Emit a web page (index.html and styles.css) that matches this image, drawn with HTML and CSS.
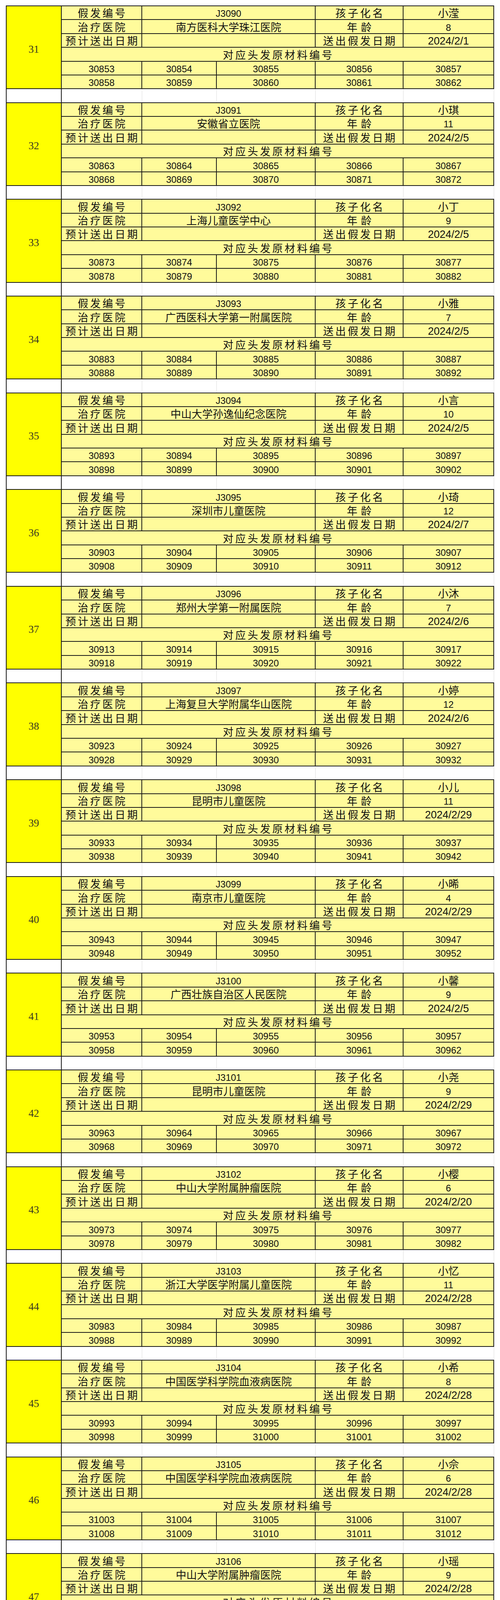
FILE: index.html
```html
<!DOCTYPE html>
<html lang="zh-CN">
<head>
<meta charset="utf-8">
<title>假发编号表</title>
<link rel="stylesheet" href="styles.css">
</head>
<body>
<main class="sheet">

<section class="blk">
<div class="no">31</div>
<div class="k">假发编号</div><div class="n c2">J3090</div><div class="k">孩子化名</div><div class="v">小滢</div>
<div class="k">治疗医院</div><div class="v c2">南方医科大学珠江医院</div><div class="k k2">年龄</div><div class="n">8</div>
<div class="k">预计送出日期</div><div class="v c2"></div><div class="k">送出假发日期</div><div class="d">2024/2/1</div>
<div class="k c5">对应头发原材料编号</div>
<div class="n">30853</div><div class="n">30854</div><div class="n">30855</div><div class="n">30856</div><div class="n">30857</div>
<div class="n">30858</div><div class="n">30859</div><div class="n">30860</div><div class="n">30861</div><div class="n">30862</div>
</section>
<div class="gap"><i></i><i></i><i></i><i></i><i></i><i></i></div>

<section class="blk">
<div class="no">32</div>
<div class="k">假发编号</div><div class="n c2">J3091</div><div class="k">孩子化名</div><div class="v">小琪</div>
<div class="k">治疗医院</div><div class="v c2">安徽省立医院</div><div class="k k2">年龄</div><div class="n">11</div>
<div class="k">预计送出日期</div><div class="v c2"></div><div class="k">送出假发日期</div><div class="d">2024/2/5</div>
<div class="k c5">对应头发原材料编号</div>
<div class="n">30863</div><div class="n">30864</div><div class="n">30865</div><div class="n">30866</div><div class="n">30867</div>
<div class="n">30868</div><div class="n">30869</div><div class="n">30870</div><div class="n">30871</div><div class="n">30872</div>
</section>
<div class="gap"><i></i><i></i><i></i><i></i><i></i><i></i></div>

<section class="blk">
<div class="no">33</div>
<div class="k">假发编号</div><div class="n c2">J3092</div><div class="k">孩子化名</div><div class="v">小丁</div>
<div class="k">治疗医院</div><div class="v c2">上海儿童医学中心</div><div class="k k2">年龄</div><div class="n">9</div>
<div class="k">预计送出日期</div><div class="v c2"></div><div class="k">送出假发日期</div><div class="d">2024/2/5</div>
<div class="k c5">对应头发原材料编号</div>
<div class="n">30873</div><div class="n">30874</div><div class="n">30875</div><div class="n">30876</div><div class="n">30877</div>
<div class="n">30878</div><div class="n">30879</div><div class="n">30880</div><div class="n">30881</div><div class="n">30882</div>
</section>
<div class="gap"><i></i><i></i><i></i><i></i><i></i><i></i></div>

<section class="blk">
<div class="no">34</div>
<div class="k">假发编号</div><div class="n c2">J3093</div><div class="k">孩子化名</div><div class="v">小雅</div>
<div class="k">治疗医院</div><div class="v c2">广西医科大学第一附属医院</div><div class="k k2">年龄</div><div class="n">7</div>
<div class="k">预计送出日期</div><div class="v c2"></div><div class="k">送出假发日期</div><div class="d">2024/2/5</div>
<div class="k c5">对应头发原材料编号</div>
<div class="n">30883</div><div class="n">30884</div><div class="n">30885</div><div class="n">30886</div><div class="n">30887</div>
<div class="n">30888</div><div class="n">30889</div><div class="n">30890</div><div class="n">30891</div><div class="n">30892</div>
</section>
<div class="gap"><i></i><i></i><i></i><i></i><i></i><i></i></div>

<section class="blk">
<div class="no">35</div>
<div class="k">假发编号</div><div class="n c2">J3094</div><div class="k">孩子化名</div><div class="v">小言</div>
<div class="k">治疗医院</div><div class="v c2">中山大学孙逸仙纪念医院</div><div class="k k2">年龄</div><div class="n">10</div>
<div class="k">预计送出日期</div><div class="v c2"></div><div class="k">送出假发日期</div><div class="d">2024/2/5</div>
<div class="k c5">对应头发原材料编号</div>
<div class="n">30893</div><div class="n">30894</div><div class="n">30895</div><div class="n">30896</div><div class="n">30897</div>
<div class="n">30898</div><div class="n">30899</div><div class="n">30900</div><div class="n">30901</div><div class="n">30902</div>
</section>
<div class="gap"><i></i><i></i><i></i><i></i><i></i><i></i></div>

<section class="blk">
<div class="no">36</div>
<div class="k">假发编号</div><div class="n c2">J3095</div><div class="k">孩子化名</div><div class="v">小琦</div>
<div class="k">治疗医院</div><div class="v c2">深圳市儿童医院</div><div class="k k2">年龄</div><div class="n">12</div>
<div class="k">预计送出日期</div><div class="v c2"></div><div class="k">送出假发日期</div><div class="d">2024/2/7</div>
<div class="k c5">对应头发原材料编号</div>
<div class="n">30903</div><div class="n">30904</div><div class="n">30905</div><div class="n">30906</div><div class="n">30907</div>
<div class="n">30908</div><div class="n">30909</div><div class="n">30910</div><div class="n">30911</div><div class="n">30912</div>
</section>
<div class="gap"><i></i><i></i><i></i><i></i><i></i><i></i></div>

<section class="blk">
<div class="no">37</div>
<div class="k">假发编号</div><div class="n c2">J3096</div><div class="k">孩子化名</div><div class="v">小沐</div>
<div class="k">治疗医院</div><div class="v c2">郑州大学第一附属医院</div><div class="k k2">年龄</div><div class="n">7</div>
<div class="k">预计送出日期</div><div class="v c2"></div><div class="k">送出假发日期</div><div class="d">2024/2/6</div>
<div class="k c5">对应头发原材料编号</div>
<div class="n">30913</div><div class="n">30914</div><div class="n">30915</div><div class="n">30916</div><div class="n">30917</div>
<div class="n">30918</div><div class="n">30919</div><div class="n">30920</div><div class="n">30921</div><div class="n">30922</div>
</section>
<div class="gap"><i></i><i></i><i></i><i></i><i></i><i></i></div>

<section class="blk">
<div class="no">38</div>
<div class="k">假发编号</div><div class="n c2">J3097</div><div class="k">孩子化名</div><div class="v">小婷</div>
<div class="k">治疗医院</div><div class="v c2">上海复旦大学附属华山医院</div><div class="k k2">年龄</div><div class="n">12</div>
<div class="k">预计送出日期</div><div class="v c2"></div><div class="k">送出假发日期</div><div class="d">2024/2/6</div>
<div class="k c5">对应头发原材料编号</div>
<div class="n">30923</div><div class="n">30924</div><div class="n">30925</div><div class="n">30926</div><div class="n">30927</div>
<div class="n">30928</div><div class="n">30929</div><div class="n">30930</div><div class="n">30931</div><div class="n">30932</div>
</section>
<div class="gap"><i></i><i></i><i></i><i></i><i></i><i></i></div>

<section class="blk">
<div class="no">39</div>
<div class="k">假发编号</div><div class="n c2">J3098</div><div class="k">孩子化名</div><div class="v">小儿</div>
<div class="k">治疗医院</div><div class="v c2">昆明市儿童医院</div><div class="k k2">年龄</div><div class="n">11</div>
<div class="k">预计送出日期</div><div class="v c2"></div><div class="k">送出假发日期</div><div class="d">2024/2/29</div>
<div class="k c5">对应头发原材料编号</div>
<div class="n">30933</div><div class="n">30934</div><div class="n">30935</div><div class="n">30936</div><div class="n">30937</div>
<div class="n">30938</div><div class="n">30939</div><div class="n">30940</div><div class="n">30941</div><div class="n">30942</div>
</section>
<div class="gap"><i></i><i></i><i></i><i></i><i></i><i></i></div>

<section class="blk">
<div class="no">40</div>
<div class="k">假发编号</div><div class="n c2">J3099</div><div class="k">孩子化名</div><div class="v">小晞</div>
<div class="k">治疗医院</div><div class="v c2">南京市儿童医院</div><div class="k k2">年龄</div><div class="n">4</div>
<div class="k">预计送出日期</div><div class="v c2"></div><div class="k">送出假发日期</div><div class="d">2024/2/29</div>
<div class="k c5">对应头发原材料编号</div>
<div class="n">30943</div><div class="n">30944</div><div class="n">30945</div><div class="n">30946</div><div class="n">30947</div>
<div class="n">30948</div><div class="n">30949</div><div class="n">30950</div><div class="n">30951</div><div class="n">30952</div>
</section>
<div class="gap"><i></i><i></i><i></i><i></i><i></i><i></i></div>

<section class="blk">
<div class="no">41</div>
<div class="k">假发编号</div><div class="n c2">J3100</div><div class="k">孩子化名</div><div class="v">小馨</div>
<div class="k">治疗医院</div><div class="v c2">广西壮族自治区人民医院</div><div class="k k2">年龄</div><div class="n">9</div>
<div class="k">预计送出日期</div><div class="v c2"></div><div class="k">送出假发日期</div><div class="d">2024/2/5</div>
<div class="k c5">对应头发原材料编号</div>
<div class="n">30953</div><div class="n">30954</div><div class="n">30955</div><div class="n">30956</div><div class="n">30957</div>
<div class="n">30958</div><div class="n">30959</div><div class="n">30960</div><div class="n">30961</div><div class="n">30962</div>
</section>
<div class="gap"><i></i><i></i><i></i><i></i><i></i><i></i></div>

<section class="blk">
<div class="no">42</div>
<div class="k">假发编号</div><div class="n c2">J3101</div><div class="k">孩子化名</div><div class="v">小尧</div>
<div class="k">治疗医院</div><div class="v c2">昆明市儿童医院</div><div class="k k2">年龄</div><div class="n">9</div>
<div class="k">预计送出日期</div><div class="v c2"></div><div class="k">送出假发日期</div><div class="d">2024/2/29</div>
<div class="k c5">对应头发原材料编号</div>
<div class="n">30963</div><div class="n">30964</div><div class="n">30965</div><div class="n">30966</div><div class="n">30967</div>
<div class="n">30968</div><div class="n">30969</div><div class="n">30970</div><div class="n">30971</div><div class="n">30972</div>
</section>
<div class="gap"><i></i><i></i><i></i><i></i><i></i><i></i></div>

<section class="blk">
<div class="no">43</div>
<div class="k">假发编号</div><div class="n c2">J3102</div><div class="k">孩子化名</div><div class="v">小樱</div>
<div class="k">治疗医院</div><div class="v c2">中山大学附属肿瘤医院</div><div class="k k2">年龄</div><div class="n">6</div>
<div class="k">预计送出日期</div><div class="v c2"></div><div class="k">送出假发日期</div><div class="d">2024/2/20</div>
<div class="k c5">对应头发原材料编号</div>
<div class="n">30973</div><div class="n">30974</div><div class="n">30975</div><div class="n">30976</div><div class="n">30977</div>
<div class="n">30978</div><div class="n">30979</div><div class="n">30980</div><div class="n">30981</div><div class="n">30982</div>
</section>
<div class="gap"><i></i><i></i><i></i><i></i><i></i><i></i></div>

<section class="blk">
<div class="no">44</div>
<div class="k">假发编号</div><div class="n c2">J3103</div><div class="k">孩子化名</div><div class="v">小忆</div>
<div class="k">治疗医院</div><div class="v c2">浙江大学医学附属儿童医院</div><div class="k k2">年龄</div><div class="n">11</div>
<div class="k">预计送出日期</div><div class="v c2"></div><div class="k">送出假发日期</div><div class="d">2024/2/28</div>
<div class="k c5">对应头发原材料编号</div>
<div class="n">30983</div><div class="n">30984</div><div class="n">30985</div><div class="n">30986</div><div class="n">30987</div>
<div class="n">30988</div><div class="n">30989</div><div class="n">30990</div><div class="n">30991</div><div class="n">30992</div>
</section>
<div class="gap"><i></i><i></i><i></i><i></i><i></i><i></i></div>

<section class="blk">
<div class="no">45</div>
<div class="k">假发编号</div><div class="n c2">J3104</div><div class="k">孩子化名</div><div class="v">小希</div>
<div class="k">治疗医院</div><div class="v c2">中国医学科学院血液病医院</div><div class="k k2">年龄</div><div class="n">8</div>
<div class="k">预计送出日期</div><div class="v c2"></div><div class="k">送出假发日期</div><div class="d">2024/2/28</div>
<div class="k c5">对应头发原材料编号</div>
<div class="n">30993</div><div class="n">30994</div><div class="n">30995</div><div class="n">30996</div><div class="n">30997</div>
<div class="n">30998</div><div class="n">30999</div><div class="n">31000</div><div class="n">31001</div><div class="n">31002</div>
</section>
<div class="gap"><i></i><i></i><i></i><i></i><i></i><i></i></div>

<section class="blk">
<div class="no">46</div>
<div class="k">假发编号</div><div class="n c2">J3105</div><div class="k">孩子化名</div><div class="v">小佘</div>
<div class="k">治疗医院</div><div class="v c2">中国医学科学院血液病医院</div><div class="k k2">年龄</div><div class="n">6</div>
<div class="k">预计送出日期</div><div class="v c2"></div><div class="k">送出假发日期</div><div class="d">2024/2/28</div>
<div class="k c5">对应头发原材料编号</div>
<div class="n">31003</div><div class="n">31004</div><div class="n">31005</div><div class="n">31006</div><div class="n">31007</div>
<div class="n">31008</div><div class="n">31009</div><div class="n">31010</div><div class="n">31011</div><div class="n">31012</div>
</section>
<div class="gap"><i></i><i></i><i></i><i></i><i></i><i></i></div>

<section class="blk">
<div class="no">47</div>
<div class="k">假发编号</div><div class="n c2">J3106</div><div class="k">孩子化名</div><div class="v">小瑶</div>
<div class="k">治疗医院</div><div class="v c2">中山大学附属肿瘤医院</div><div class="k k2">年龄</div><div class="n">9</div>
<div class="k">预计送出日期</div><div class="v c2"></div><div class="k">送出假发日期</div><div class="d">2024/2/28</div>
<div class="k c5">对应头发原材料编号</div>
<div class="n">31013</div><div class="n">31014</div><div class="n">31015</div><div class="n">31016</div><div class="n">31017</div>
<div class="n">31018</div><div class="n">31019</div><div class="n">31020</div><div class="n">31021</div><div class="n">31022</div>
</section>
<div class="gap"><i></i><i></i><i></i><i></i><i></i><i></i></div>

<section class="blk">
<div class="no">48</div>
<div class="k">假发编号</div><div class="n c2">J3107</div><div class="k">孩子化名</div><div class="v">小郑</div>
<div class="k">治疗医院</div><div class="v c2">中山大学附属第三医院</div><div class="k k2">年龄</div><div class="n">6</div>
<div class="k">预计送出日期</div><div class="v c2"></div><div class="k">送出假发日期</div><div class="d">2024/2/7</div>
<div class="k c5">对应头发原材料编号</div>
<div class="n">31023</div><div class="n">31024</div><div class="n">31025</div><div class="n">31026</div><div class="n">31027</div>
<div class="n">31028</div><div class="n">31029</div><div class="n">31030</div><div class="n">31031</div><div class="n">31032</div>
</section>
<div class="gap"><i></i><i></i><i></i><i></i><i></i><i></i></div>

<section class="blk">
<div class="no">49</div>
<div class="k">假发编号</div><div class="n c2">J3108</div><div class="k">孩子化名</div><div class="v">小娜</div>
<div class="k">治疗医院</div><div class="v c2">中山大学附属第三医院</div><div class="k k2">年龄</div><div class="n">15</div>
<div class="k">预计送出日期</div><div class="v c2"></div><div class="k">送出假发日期</div><div class="d">2024/2/28</div>
<div class="k c5">对应头发原材料编号</div>
<div class="n">31033</div><div class="n">31034</div><div class="n">31035</div><div class="n">31036</div><div class="n">31037</div>
<div class="n">31038</div><div class="n">31039</div><div class="n">31040</div><div class="n">31041</div><div class="n">31042</div>
</section>
<div class="gap"><i></i><i></i><i></i><i></i><i></i><i></i></div>

<section class="blk">
<div class="no">50</div>
<div class="k">假发编号</div><div class="n c2">J3109</div><div class="k">孩子化名</div><div class="v">小婉</div>
<div class="k">治疗医院</div><div class="v c2">广西壮族自治区人民医院</div><div class="k k2">年龄</div><div class="n">10</div>
<div class="k">预计送出日期</div><div class="v c2"></div><div class="k">送出假发日期</div><div class="d">2024/2/6</div>
<div class="k c5">对应头发原材料编号</div>
<div class="n">31043</div><div class="n">31044</div><div class="n">31045</div><div class="n">31046</div><div class="n">31047</div>
<div class="n">31048</div><div class="n">31049</div><div class="n">31050</div><div class="n">31051</div><div class="n">31052</div>
</section>
<div class="gap"><i></i><i></i><i></i><i></i><i></i><i></i></div>

<section class="blk">
<div class="no">51</div>
<div class="k">假发编号</div><div class="n c2">J3110</div><div class="k">孩子化名</div><div class="v">小美</div>
<div class="k">治疗医院</div><div class="v c2">湖南省儿童医院</div><div class="k k2">年龄</div><div class="n">13</div>
<div class="k">预计送出日期</div><div class="v c2"></div><div class="k">送出假发日期</div><div class="d">2024/2/6</div>
<div class="k c5">对应头发原材料编号</div>
<div class="n">31053</div><div class="n">31054</div><div class="n">31055</div><div class="n">31056</div><div class="n">31057</div>
<div class="n">31058</div><div class="n">31059</div><div class="n">31060</div><div class="n">31061</div><div class="n">31062</div>
</section>
<div class="gap"><i></i><i></i><i></i><i></i><i></i><i></i></div>

<section class="blk">
<div class="no">52</div>
<div class="k">假发编号</div><div class="n c2">J3111</div><div class="k">孩子化名</div><div class="v">小溪</div>
<div class="k">治疗医院</div><div class="v c2">福建医科大学附属漳州市医院</div><div class="k k2">年龄</div><div class="n">6</div>
<div class="k">预计送出日期</div><div class="v c2"></div><div class="k">送出假发日期</div><div class="d">2024/2/22</div>
<div class="k c5">对应头发原材料编号</div>
<div class="n">31063</div><div class="n">31064</div><div class="n">31065</div><div class="n">31066</div><div class="n">31067</div>
<div class="n">31068</div><div class="n">31069</div><div class="n">31070</div><div class="n">31071</div><div class="n">31072</div>
</section>
<div class="gap"><i></i><i></i><i></i><i></i><i></i><i></i></div>

<section class="blk">
<div class="no">53</div>
<div class="k">假发编号</div><div class="n c2">J3112</div><div class="k">孩子化名</div><div class="v">小萌</div>
<div class="k">治疗医院</div><div class="v c2">福建医科大学附属漳州市医院</div><div class="k k2">年龄</div><div class="n">3</div>
<div class="k">预计送出日期</div><div class="v c2"></div><div class="k">送出假发日期</div><div class="d">2024/2/28</div>
<div class="k c5">对应头发原材料编号</div>
<div class="n">31073</div><div class="n">31074</div><div class="n">31075</div><div class="n">31076</div><div class="n">31077</div>
<div class="n">31078</div><div class="n">31079</div><div class="n">31080</div><div class="n">31081</div><div class="n">31082</div>
</section>
<div class="gap"><i></i><i></i><i></i><i></i><i></i><i></i></div>

<section class="blk">
<div class="no">54</div>
<div class="k">假发编号</div><div class="n c2">J3113</div><div class="k">孩子化名</div><div class="v">小馨</div>
<div class="k">治疗医院</div><div class="v c2">广州医科大学附属第五医院</div><div class="k k2">年龄</div><div class="n">4</div>
<div class="k">预计送出日期</div><div class="v c2"></div><div class="k">送出假发日期</div><div class="d">2024/2/28</div>
<div class="k c5">对应头发原材料编号</div>
<div class="n">31083</div><div class="n">31084</div><div class="n">31085</div><div class="n">31086</div><div class="n">31087</div>
<div class="n">31088</div><div class="n">31089</div><div class="n">31090</div><div class="n">31091</div><div class="n">31092</div>
</section>
<div class="gap"><i></i><i></i><i></i><i></i><i></i><i></i></div>

<section class="blk">
<div class="no">55</div>
<div class="k">假发编号</div><div class="n c2">J3114</div><div class="k">孩子化名</div><div class="v">小林</div>
<div class="k">治疗医院</div><div class="v c2">广东省人民医院</div><div class="k k2">年龄</div><div class="n">12</div>
<div class="k">预计送出日期</div><div class="v c2"></div><div class="k">送出假发日期</div><div class="d">2024/2/20</div>
<div class="k c5">对应头发原材料编号</div>
<div class="n">31093</div><div class="n">31094</div><div class="n">31095</div><div class="n">31096</div><div class="n">31097</div>
<div class="n">31098</div><div class="n">31099</div><div class="n">31100</div><div class="n">31101</div><div class="n">31102</div>
</section>
<div class="gap"><i></i><i></i><i></i><i></i><i></i><i></i></div>

<section class="blk">
<div class="no">56</div>
<div class="k">假发编号</div><div class="n c2">J3115</div><div class="k">孩子化名</div><div class="v">小静</div>
<div class="k">治疗医院</div><div class="v c2">中山大学附属肿瘤医院</div><div class="k k2">年龄</div><div class="n">7</div>
<div class="k">预计送出日期</div><div class="v c2"></div><div class="k">送出假发日期</div><div class="d">2024/2/28</div>
<div class="k c5">对应头发原材料编号</div>
<div class="n">31103</div><div class="n">31104</div><div class="n">31105</div><div class="n">31106</div><div class="n">31107</div>
<div class="n">31108</div><div class="n">31109</div><div class="n">31110</div><div class="n">31111</div><div class="n">31112</div>
</section>
<div class="gap"><i></i><i></i><i></i><i></i><i></i><i></i></div>

<section class="blk">
<div class="no">57</div>
<div class="k">假发编号</div><div class="n c2">J3116</div><div class="k">孩子化名</div><div class="v">小童</div>
<div class="k">治疗医院</div><div class="v c2">中山大学附属第三医院</div><div class="k k2">年龄</div><div class="n">6</div>
<div class="k">预计送出日期</div><div class="v c2"></div><div class="k">送出假发日期</div><div class="d">2024/2/28</div>
<div class="k c5">对应头发原材料编号</div>
<div class="n">31113</div><div class="n">31114</div><div class="n">31115</div><div class="n">31116</div><div class="n">31117</div>
<div class="n">31118</div><div class="n">31119</div><div class="n">31120</div><div class="n">31121</div><div class="n">31122</div>
</section>
<div class="gap"><i></i><i></i><i></i><i></i><i></i><i></i></div>

<section class="blk">
<div class="no">58</div>
<div class="k">假发编号</div><div class="n c2">J3117</div><div class="k">孩子化名</div><div class="v">小杰</div>
<div class="k">治疗医院</div><div class="v c2">中国医学科学院血液病医院</div><div class="k k2">年龄</div><div class="n">9</div>
<div class="k">预计送出日期</div><div class="v c2"></div><div class="k">送出假发日期</div><div class="d">2024/2/28</div>
<div class="k c5">对应头发原材料编号</div>
<div class="n">31123</div><div class="n">31124</div><div class="n">31125</div><div class="n">31126</div><div class="n">31127</div>
<div class="n">31128</div><div class="n">31129</div><div class="n">31130</div><div class="n">31131</div><div class="n">31132</div>
</section>
<div class="gap"><i></i><i></i><i></i><i></i><i></i><i></i></div>

<section class="blk">
<div class="no">59</div>
<div class="k">假发编号</div><div class="n c2">J3118</div><div class="k">孩子化名</div><div class="v">小昊</div>
<div class="k">治疗医院</div><div class="v c2">福建协和医院</div><div class="k k2">年龄</div><div class="n">6</div>
<div class="k">预计送出日期</div><div class="v c2"></div><div class="k">送出假发日期</div><div class="d">2024/2/28</div>
<div class="k c5">对应头发原材料编号</div>
<div class="n">31133</div><div class="n">31134</div><div class="n">31135</div><div class="n">31136</div><div class="n">31137</div>
<div class="n">31138</div><div class="n">31139</div><div class="n">31140</div><div class="n">31141</div><div class="n">31142</div>
</section>
<div class="gap"><i></i><i></i><i></i><i></i><i></i><i></i></div>

<section class="blk">
<div class="no">60</div>
<div class="k">假发编号</div><div class="n c2">J3119</div><div class="k">孩子化名</div><div class="v">小乔</div>
<div class="k">治疗医院</div><div class="v c2">福建医科大学附属漳州市医院</div><div class="k k2">年龄</div><div class="n">9</div>
<div class="k">预计送出日期</div><div class="v c2"></div><div class="k">送出假发日期</div><div class="d">2024/2/22</div>
<div class="k c5">对应头发原材料编号</div>
<div class="n">31143</div><div class="n">31144</div><div class="n">31145</div><div class="n">31146</div><div class="n">31147</div>
<div class="n">31148</div><div class="n">31149</div><div class="n">31150</div><div class="n">31151</div><div class="n">31152</div>
</section>
<div class="gap"><i></i><i></i><i></i><i></i><i></i><i></i></div>

<section class="blk">
<div class="no">61</div>
<div class="k">假发编号</div><div class="n c2">J3120</div><div class="k">孩子化名</div><div class="v">小鸣</div>
<div class="k">治疗医院</div><div class="v c2">福建医科大学附属漳州市医院</div><div class="k k2">年龄</div><div class="n">12</div>
<div class="k">预计送出日期</div><div class="v c2"></div><div class="k">送出假发日期</div><div class="d">2024/2/22</div>
<div class="k c5">对应头发原材料编号</div>
<div class="n">31153</div><div class="n">31154</div><div class="n">31155</div><div class="n">31156</div><div class="n">31157</div>
<div class="n">31158</div><div class="n">31159</div><div class="n">31160</div><div class="n">31161</div><div class="n">31162</div>
</section>

</main>
</body>
</html>
```

FILE: styles.css
```css
html, body {
  margin: 0;
  padding: 0;
  background: #ffffff;
}

.sheet {
  padding: 14px 0 0 15px;
}

.blk {
  display: grid;
  grid-template-columns: 141px 206px 191px 253px 225px 232px;
  grid-template-rows: repeat(6, 35.39px);
  width: max-content;
  border-top: 2px solid #1a1a1a;
  border-left: 2px solid #1a1a1a;
}

.blk > div {
  box-sizing: border-box;
  border-right: 2px solid #1a1a1a;
  border-bottom: 2px solid #1a1a1a;
  background: #fffb9b;
  display: flex;
  align-items: flex-end;
  justify-content: center;
  white-space: nowrap;
  line-height: 28px;
  padding-bottom: 2px;
  color: #111111;
  font-family: "Noto Sans CJK SC", "Noto Sans CJK JP", sans-serif;
  font-size: 27px;
}

.blk > .no {
  grid-row: 1 / span 6;
  background: #ffff00;
  align-items: center;
  padding: 9px 0 0 0;
  font-family: "Liberation Serif", serif;
  font-size: 27px;
  color: #3a3a22;
}

.blk > .k {
  letter-spacing: 4.6px;
  padding-left: 4.6px;
}

.blk > .k2 {
  letter-spacing: 9px;
  padding-left: 9px;
}

.blk > .n {
  font-family: "Liberation Sans", Arial, sans-serif;
  font-size: 24px;
  padding-bottom: 0;
}

.blk > .d {
  font-family: "Liberation Sans", Arial, sans-serif;
  font-size: 27px;
  padding-bottom: 1px;
}

.c2 {
  grid-column: span 2;
}

.c5 {
  grid-column: span 5;
}

.gap {
  display: grid;
  grid-template-columns: 143px 206px 191px 253px 225px 232px;
  height: 33.4px;
  width: max-content;
}

.gap i {
  box-sizing: border-box;
  border-right: 1px solid #dcdcdc;
}

.gap i:first-child {
  border-left: 2px solid #1a1a1a;
  border-right: 2px solid #1a1a1a;
}
```
